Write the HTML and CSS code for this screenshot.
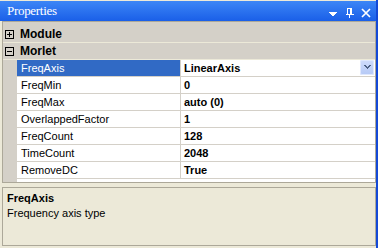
FILE: index.html
```html
<!DOCTYPE html>
<html lang="en">
<head>
    <meta charset="UTF-8">
    <title>Properties</title>
    <link rel="stylesheet" href="styles.css">
</head>
<body>
    <div class="window">
        <div class="titlebar">
            <span class="title">Properties</span>
            <svg class="tools" width="48" height="20" viewBox="0 0 48 20" shape-rendering="crispEdges">
                <polygon points="0,11 9,11 4.5,15.5" fill="#fff"/>
                <rect x="19.5" y="7.5" width="4" height="6" fill="none" stroke="#fff"/>
                <rect x="22" y="8" width="1" height="5" fill="#fff"/>
                <rect x="18" y="13" width="8" height="1" fill="#fff"/>
                <rect x="21" y="14" width="1" height="3" fill="#fff"/>
                <path d="M34 8 L42 16 M42 8 L34 16" stroke="#fff" stroke-width="1.7" shape-rendering="auto"/>
            </svg>
        </div>

        <div class="grid">
            <div class="cat cat-first">
                <svg class="toggle" width="9" height="9" viewBox="0 0 9 9" shape-rendering="crispEdges">
                    <rect x="0.5" y="0.5" width="8" height="8" fill="none" stroke="#000"/>
                    <rect x="2" y="4" width="5" height="1" fill="#000"/>
                    <rect x="4" y="2" width="1" height="5" fill="#000"/>
                </svg>
                <span>Module</span>
            </div>
            <div class="cat">
                <svg class="toggle" width="9" height="9" viewBox="0 0 9 9" shape-rendering="crispEdges">
                    <rect x="0.5" y="0.5" width="8" height="8" fill="none" stroke="#000"/>
                    <rect x="2" y="4" width="5" height="1" fill="#000"/>
                </svg>
                <span>Morlet</span>
            </div>

            <div class="prop selected">
                <span class="gutter"></span>
                <span class="name">FreqAxis</span>
                <span class="value">LinearAxis
                    <span class="drop">
                        <svg width="7" height="5" viewBox="0 0 7 5" shape-rendering="crispEdges">
                            <path d="M0 0h2v1h1v1h1v-1h1v-1h2v1h-1v1h-1v1h-1v1h-1v-1h-1v-1h-1v-1h-1z" fill="#4d6185"/>
                        </svg>
                    </span>
                </span>
            </div>
            <div class="prop">
                <span class="gutter"></span>
                <span class="name">FreqMin</span>
                <span class="value">0</span>
            </div>
            <div class="prop">
                <span class="gutter"></span>
                <span class="name">FreqMax</span>
                <span class="value">auto (0)</span>
            </div>
            <div class="prop">
                <span class="gutter"></span>
                <span class="name">OverlappedFactor</span>
                <span class="value">1</span>
            </div>
            <div class="prop">
                <span class="gutter"></span>
                <span class="name">FreqCount</span>
                <span class="value">128</span>
            </div>
            <div class="prop">
                <span class="gutter"></span>
                <span class="name">TimeCount</span>
                <span class="value">2048</span>
            </div>
            <div class="prop">
                <span class="gutter"></span>
                <span class="name">RemoveDC</span>
                <span class="value">True</span>
            </div>
            <div class="filler"></div>
        </div>

        <div class="desc">
            <div class="desc-title">FreqAxis</div>
            <div>Frequency axis type</div>
        </div>
    </div>
</body>
</html>
```

FILE: styles.css
```css
body {
    margin: 0;
    width: 378px;
    height: 248px;
    overflow: hidden;
    background-color: #ece9d8;
    font-family: "Liberation Sans", Arial, sans-serif;
    font-size: 11px;
    color: #000;
}
.window {
    display: flex;
    flex-direction: column;
    height: 248px;
    border-right: 2px solid #1449d6;
    box-sizing: border-box;
}
.titlebar {
    display: flex;
    align-items: center;
    height: 20px;
    margin-top: 1px;
    padding-left: 7px;
    background: linear-gradient(#3c86f6, #1a5fe8);
}
.title {
    font-family: "Liberation Serif", "Times New Roman", serif;
    font-size: 13px;
    color: white;
    letter-spacing: -0.3px;
}
.tools {
    margin-left: auto;
    display: block;
}
.grid {
    display: flex;
    flex-direction: column;
    height: 162px;
    margin-left: 2px;
    border: 1px solid #aca899;
    background-color: white;
    box-sizing: border-box;
}
.cat {
    display: flex;
    align-items: center;
    gap: 6px;
    height: 17px;
    padding-left: 2px;
    background-color: #d4d0c8;
    border-bottom: 1px solid #ece9d8;
    box-sizing: border-box;
    font-weight: bold;
    font-size: 12px;
}
.cat-first {
    height: 21px;
    padding-top: 4px;
}
.toggle {
    display: block;
}
.prop {
    display: flex;
    height: 17px;
    line-height: 16px;
}
.gutter {
    width: 14px;
    background-color: #d4d0c8;
}
.name {
    width: 163px;
    padding-left: 4px;
    box-sizing: border-box;
    border-bottom: 1px solid #d4d0c8;
}
.selected .name {
    background-color: #316ac5;
    color: white;
}
.value {
    flex: 1;
    display: flex;
    padding-left: 3px;
    border-left: 1px solid #d4d0c8;
    border-bottom: 1px solid #d4d0c8;
    font-weight: bold;
}
.drop {
    display: flex;
    align-items: center;
    justify-content: center;
    width: 14px;
    height: 15px;
    margin-left: auto;
    margin-right: 1px;
    border-radius: 2px;
    background: linear-gradient(#cfdcfb, #b5c9f6);
    box-shadow: inset 0 0 0 1px #dfe8fd;
}
.filler {
    flex: 1;
    border-left: 14px solid #d4d0c8;
}
.desc {
    height: 59px;
    margin: 4px 0 0 2px;
    padding: 3px 4px 0;
    border: 1px solid #aca899;
    box-sizing: border-box;
    line-height: 15px;
}
.desc-title {
    font-weight: bold;
}
```
